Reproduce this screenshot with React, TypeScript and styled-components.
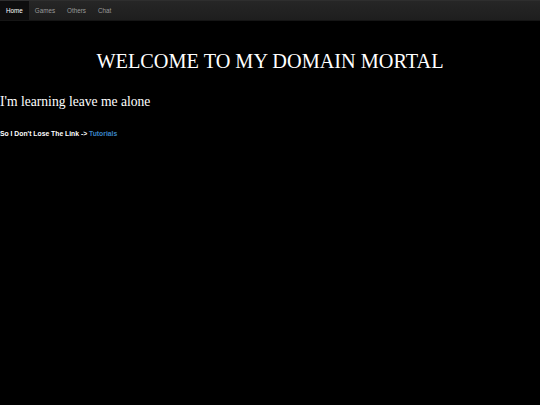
import React from "react";
import styled, { createGlobalStyle } from "styled-components";

const Global = createGlobalStyle`
  html, body { margin: 0; padding: 0; background: #000; }
  body { font-family: "Liberation Serif", "Times New Roman", serif; color: #fff; }
`;

const Page = styled.div`
  min-height: 405px;
  background: #000;
`;

const NavBar = styled.nav`
  display: flex;
  align-items: stretch;
  height: 21px;
  background: linear-gradient(#262626, #1e1e1e);
  border-top: 1px solid #2e2e2e;
  box-sizing: border-box;
  border-bottom: 1px solid #151515;
`;

const NavItem = styled.a<{ $active?: boolean }>`
  display: flex;
  align-items: center;
  padding: 0 6px;
  font-family: "Liberation Sans", Arial, sans-serif;
  font-size: 6.3px;
  color: ${(p) => (p.$active ? "#fff" : "#9a9a9a")};
  background: ${(p) => (p.$active ? "#0e0e0e" : "transparent")};
  text-decoration: none;
`;

const Title = styled.h1`
  margin: 29px 0 0;
  text-align: center;
  font-weight: normal;
  font-size: 20.3px;
  line-height: 22px;
  color: #fff;
`;

const Sub = styled.h2`
  margin: 22px 0 0;
  font-weight: normal;
  font-size: 13.6px;
  line-height: 16px;
  color: #fff;
`;

const Note = styled.p`
  margin: 20px 0 0;
  font-family: "Liberation Sans", Arial, sans-serif;
  font-weight: bold;
  font-size: 6.8px;
  color: #fff;
`;

const Link = styled.a`
  color: #3a84c6;
  text-decoration: none;
`;

export default function App() {
  return (
    <Page>
      <Global />
      <NavBar>
        <NavItem $active href="#">Home</NavItem>
        <NavItem href="#">Games</NavItem>
        <NavItem href="#">Others</NavItem>
        <NavItem href="#">Chat</NavItem>
      </NavBar>
      <Title>WELCOME TO MY DOMAIN MORTAL</Title>
      <Sub>I'm learning leave me alone</Sub>
      <Note>
        So I Don't Lose The Link -&gt; <Link href="#">Tutorials</Link>
      </Note>
    </Page>
  );
}
